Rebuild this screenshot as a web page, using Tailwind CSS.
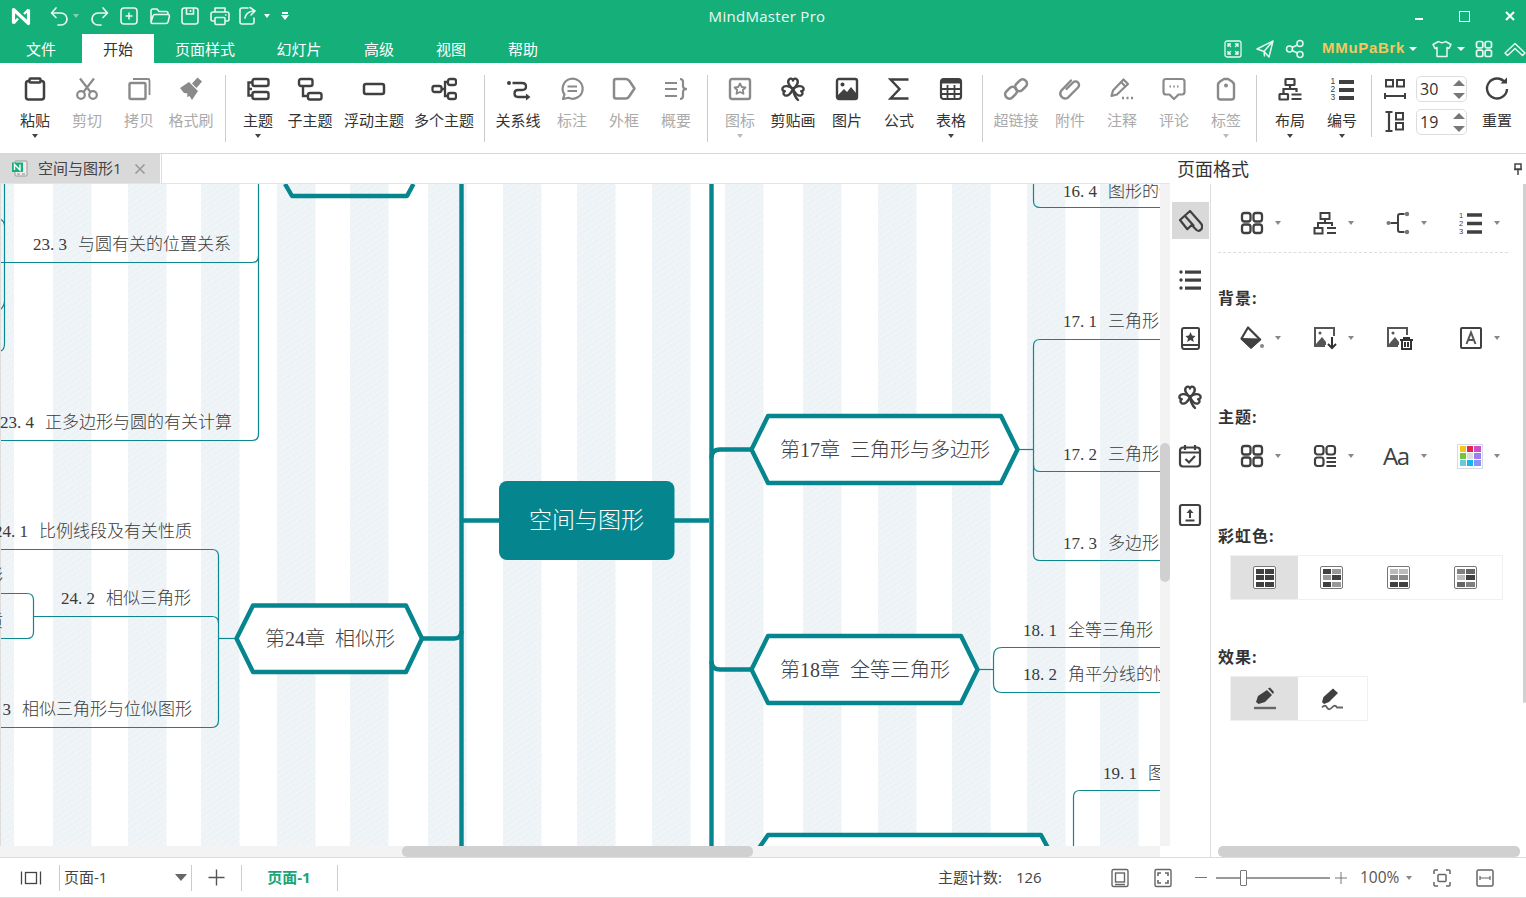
<!DOCTYPE html>
<html lang="zh">
<head>
<meta charset="utf-8">
<title>MindMaster Pro</title>
<script src="https://cdn.jsdelivr.net/npm/@tailwindcss/browser@4"></script>
</head>
<body class="m-0 bg-white">
<svg class="absolute w-0 h-0" aria-hidden="true">
  <defs>
    <symbol id="apps" viewBox="0 0 24 24"><g fill="none" stroke="currentColor" stroke-width="2.3"><rect x="2" y="2" width="8.5" height="8.5" rx="2.5"/><rect x="13.5" y="2" width="8.5" height="8.5" rx="2.5"/><rect x="2" y="13.5" width="8.5" height="8.5" rx="2.5"/><rect x="13.5" y="13.5" width="8.5" height="8.5" rx="2.5"/></g></symbol>
    <symbol id="clover" viewBox="0 0 26 26"><g fill="none" stroke="currentColor" stroke-width="2.4" stroke-linejoin="round" stroke-linecap="round"><path d="M13 13C9 10 7 6 9 3.500C10.500 2 12.500 2.500 13 4.500C13.500 2.500 15.500 2 17 3.500C19 6 17 10 13 13Z"/><path d="M13 13C9 10 7 6 9 3.500C10.500 2 12.500 2.500 13 4.500C13.500 2.500 15.500 2 17 3.500C19 6 17 10 13 13Z" transform="rotate(-105 13 13)"/><path d="M13 13C9 10 7 6 9 3.500C10.500 2 12.500 2.500 13 4.500C13.500 2.500 15.500 2 17 3.500C19 6 17 10 13 13Z" transform="rotate(105 13 13)"/><path d="M13 13Q14 20 18 24"/></g></symbol>
    <pattern id="hatch" width="7" height="7" patternUnits="userSpaceOnUse" patternTransform="rotate(12)">
      <rect width="7" height="7" fill="#ecf2f5"/>
      <path d="M0 7L7 0M-1 1L1 -1M6 8L8 6" stroke="#f7fafb" stroke-width="0.800"/>
      <path d="M0 0L7 7M6 -1L8 1M-1 6L1 8" stroke="#f3f7f9" stroke-width="0.800"/>
    </pattern>
  </defs>
</svg>

<div class="w-[1526px] h-[898px] overflow-hidden flex flex-col font-['Open_Sans','Noto_Sans_CJK_SC',sans-serif] text-[#333]">

  <!-- title bar -->
  <div class="h-[34px] pb-[2px] bg-[#15af79] grid grid-cols-[1fr_auto_1fr] items-center text-white shrink-0">
    <div class="flex items-center pl-[10px]">
      <svg class="w-[22px] h-[22px]" viewBox="0 0 22 22" fill="none" stroke="#fff" stroke-width="3.200" stroke-linejoin="round"><path d="M3.500 18.500V4.500L18.500 18.500V4.500"/><path d="M3.500 18.500L8 13.500M18.500 4.500L14 9" stroke-width="2.400"/></svg>
      <svg class="ml-[16px] w-[22px] h-[22px]" viewBox="0 0 22 22" fill="none" stroke="#e6f7f0" stroke-width="1.700" stroke-linecap="round" stroke-linejoin="round"><path d="M8 3L3.500 8L8 12.500M4 8H13A6 6 0 0 1 13 20H10"/></svg>
      <i class="ml-[3px] w-0 h-0 border-x-[3.500px] border-x-transparent border-t-[4px] border-t-[#7fd2b4]"></i>
      <svg class="ml-[10px] w-[22px] h-[22px]" viewBox="0 0 22 22" fill="none" stroke="#e6f7f0" stroke-width="1.700" stroke-linecap="round" stroke-linejoin="round"><path d="M14 3L18.500 8L14 12.500M18 8H9A6 6 0 0 0 9 20H12"/></svg>
      <svg class="ml-[7px] w-[22px] h-[22px]" viewBox="0 0 22 22" fill="none" stroke="#e6f7f0" stroke-width="1.600"><rect x="3" y="3" width="16" height="16" rx="3"/><path d="M11 7.500V14.500M7.500 11H14.500"/></svg>
      <svg class="ml-[9px] w-[22px] h-[22px]" viewBox="0 0 22 22" fill="none" stroke="#e6f7f0" stroke-width="1.600" stroke-linejoin="round"><path d="M2 17V6Q2 4 4 4H8L10 6.500H17Q19 6.500 19 8.500V9M2 17Q2 18.500 4 18.500H17Q18.500 18.500 19 17L20.500 11Q20.500 9.500 19 9.500H6Q4.500 9.500 4 11L2 17Z"/></svg>
      <svg class="ml-[8px] w-[22px] h-[22px]" viewBox="0 0 22 22" fill="none" stroke="#e6f7f0" stroke-width="1.600"><rect x="3" y="3" width="16" height="16" rx="2.500"/><path d="M7.500 3V9H14.500V3M11.500 5V7"/></svg>
      <svg class="ml-[8px] w-[22px] h-[22px]" viewBox="0 0 22 22" fill="none" stroke="#e6f7f0" stroke-width="1.600" stroke-linejoin="round"><path d="M6 7V3H16V7M6 16H3.500Q2 16 2 14V9Q2 7 4 7H18Q20 7 20 9V14Q20 16 18.500 16H16"/><rect x="6" y="12.500" width="10" height="7" rx="1"/><path d="M16 10H17.500"/></svg>
      <svg class="ml-[6px] w-[22px] h-[22px]" viewBox="0 0 22 22" fill="none" stroke="#e6f7f0" stroke-width="1.600" stroke-linecap="round" stroke-linejoin="round"><path d="M11 3H5Q3 3 3 5V17Q3 19 5 19H15Q17 19 17 17V13M8 13Q9 7 16 6M13 2.500L18 6L14 10"/></svg>
      <i class="ml-[5px] w-0 h-0 border-x-[3.500px] border-x-transparent border-t-[4px] border-t-white"></i>
      <div class="ml-[11px] w-[8px] flex flex-col items-center gap-[1px]"><i class="w-[6px] h-[2px] bg-white"></i><i class="w-0 h-0 border-x-[4px] border-x-transparent border-t-[5px] border-t-white"></i></div>
    </div>
    <div class="pl-[8px] text-[15px] tracking-[0.3px] text-[#eefaf5] leading-[20px]">MindMaster Pro</div>
    <div class="flex items-center justify-end gap-[34px] pr-[10px]">
      <i class="block w-[8px] h-[2px] bg-white mt-[6px] ml-[2px] mr-[2px]"></i>
      <i class="block w-[11px] h-[11px] border-[1.500px] border-white"></i>
      <svg class="w-[12px] h-[12px]" viewBox="0 0 12 12" stroke="#fff" stroke-width="2"><path d="M2 2L10 10M10 2L2 10"/></svg>
    </div>
  </div>

  <!-- menu tabs -->
  <div class="h-[29px] bg-[#15af79] flex items-stretch justify-between shrink-0 text-[15px] text-white">
    <div class="flex items-stretch">
      <div class="w-[82px] pt-[1px] flex items-center justify-center">文件</div>
      <div class="w-[72px] pt-[1px] flex items-center justify-center bg-white text-[#333]">开始</div>
      <div class="w-[102px] pt-[1px] flex items-center justify-center">页面样式</div>
      <div class="w-[86px] pt-[1px] flex items-center justify-center">幻灯片</div>
      <div class="w-[74px] pt-[1px] flex items-center justify-center">高级</div>
      <div class="w-[70px] pt-[1px] flex items-center justify-center">视图</div>
      <div class="w-[74px] pt-[1px] flex items-center justify-center">帮助</div>
    </div>
    <div class="flex items-center w-[303px]">
      <svg class="w-[20px] h-[20px]" viewBox="0 0 20 20" fill="none" stroke="#e6f7f0" stroke-width="1.300"><rect x="2" y="2" width="16" height="16" rx="2"/><path d="M5 8V5H8M12 5H15V8M5 12V15H8M15 12V15H12M5 5L8 8M15 5L12 8M5 15L8 12M15 15L12 12"/></svg>
      <svg class="ml-[12px] w-[20px] h-[20px]" viewBox="0 0 20 20" fill="none" stroke="#e6f7f0" stroke-width="1.500" stroke-linejoin="round"><path d="M18 2L2 10L9 12.500L14 18L18 2ZM18 2L9 12.500L9.500 17.500"/></svg>
      <svg class="ml-[10px] w-[20px] h-[20px]" viewBox="0 0 20 20" fill="none" stroke="#e6f7f0" stroke-width="1.500"><circle cx="4.500" cy="10" r="3"/><circle cx="15" cy="4.500" r="3"/><circle cx="15" cy="15.500" r="3"/><path d="M7 8.500L12.500 6M7 11.500L12.500 14"/></svg>
      <span class="ml-[17px] w-[83px] font-bold text-[15px] text-[#f6c660] font-['Liberation_Sans',sans-serif] tracking-[0.7px] whitespace-nowrap">MMuPaBrk</span>
      <i class="ml-[4px] w-0 h-0 border-x-[4px] border-x-transparent border-t-[4px] border-t-white"></i>
      <svg class="ml-[15px] w-[20px] h-[20px]" viewBox="0 0 20 20" fill="none" stroke="#e6f7f0" stroke-width="1.500" stroke-linejoin="round"><path d="M6.500 2.500Q10 5 13.500 2.500L19 5.500L17 9.500L15 8.500V17.500H5V8.500L3 9.500L1 5.500Z"/></svg>
      <i class="ml-[5px] w-0 h-0 border-x-[4px] border-x-transparent border-t-[4px] border-t-white"></i>
      <svg class="ml-[10px] w-[18px] h-[18px] text-[#e6f7f0]"><use href="#apps"/></svg>
      <svg class="ml-[11px] w-[22px] h-[20px]" viewBox="0 0 22 20" fill="none" stroke="#e6f7f0" stroke-width="1.500" stroke-linejoin="round"><path d="M1 14L11 4.500L21 14L18.500 16.500L11 9.500L3.500 16.500Z"/></svg>
    </div>
  </div>

  <!-- ribbon -->
  <div class="h-[91px] bg-white border-b border-[#d8d8d8] flex items-start pl-[9px] shrink-0 text-[15px]">
    <!-- G1 -->
    <div class="w-[52px] flex flex-col items-center pt-[13px]">
      <svg class="w-[26px] h-[26px] text-[#404040]" viewBox="0 0 26 26" fill="none" stroke="currentColor" stroke-width="2.500"><rect x="4" y="5" width="18" height="18.500" rx="2.500"/><rect x="7.500" y="2.500" width="11" height="4" rx="1" fill="#fff"/></svg>
      <span class="mt-[9px] leading-[18px] whitespace-nowrap">粘贴</span>
      <i class="mt-[5px] w-0 h-0 border-x-[3.500px] border-x-transparent border-t-[4px] border-t-[#444]"></i>
    </div>
    <div class="w-[52px] flex flex-col items-center pt-[13px]">
      <svg class="w-[26px] h-[26px] text-[#8a8a8a]" viewBox="0 0 26 26" fill="none" stroke="currentColor" stroke-width="2.200"><circle cx="7" cy="19" r="3.800"/><circle cx="19" cy="19" r="3.800"/><path d="M9.500 16L20 2.500M16.500 16L6 2.500"/></svg>
      <span class="mt-[9px] leading-[18px] whitespace-nowrap text-[#aaa]">剪切</span>
    </div>
    <div class="w-[52px] flex flex-col items-center pt-[13px]">
      <svg class="w-[26px] h-[26px] text-[#8a8a8a]" viewBox="0 0 26 26" fill="none" stroke="currentColor" stroke-width="2.400"><rect x="3.500" y="7" width="16" height="16" rx="1.500"/><path d="M7 3H22Q23.500 3 23.500 4.500V19" stroke-width="1.800"/></svg>
      <span class="mt-[9px] leading-[18px] whitespace-nowrap text-[#aaa]">拷贝</span>
    </div>
    <div class="w-[52px] flex flex-col items-center pt-[13px]">
      <svg class="w-[26px] h-[26px] text-[#8a8a8a]" viewBox="0 0 26 26" fill="currentColor"><path d="M2 12L11 6L20 15L14 24L11.500 20L9 21L9.500 17.500L6 17Z"/><path d="M14 7.500L19.500 1.500L24 5.500L18.500 12Z"/></svg>
      <span class="mt-[9px] leading-[18px] whitespace-nowrap text-[#aaa]">格式刷</span>
    </div>
    <i class="ml-[8px] mt-[12px] w-px h-[67px] bg-[#ccc]"></i>
    <!-- G2 -->
    <div class="ml-[6px] w-[52px] flex flex-col items-center pt-[13px]">
      <svg class="w-[26px] h-[26px] text-[#404040]" viewBox="0 0 26 26" fill="none" stroke="currentColor" stroke-width="2.400"><rect x="7.500" y="3" width="16" height="7" rx="2"/><rect x="7.500" y="16" width="16" height="7" rx="2"/><path d="M7.500 6.500H3.500V19.500H7.500M3.500 13H7"/></svg>
      <span class="mt-[9px] leading-[18px] whitespace-nowrap">主题</span>
      <i class="mt-[5px] w-0 h-0 border-x-[3.500px] border-x-transparent border-t-[4px] border-t-[#444]"></i>
    </div>
    <div class="w-[52px] flex flex-col items-center pt-[13px]">
      <svg class="w-[26px] h-[26px] text-[#404040]" viewBox="0 0 26 26" fill="none" stroke="currentColor" stroke-width="2.400"><rect x="2" y="3" width="13.500" height="7" rx="2"/><rect x="11" y="17" width="13.500" height="6.500" rx="2"/><path d="M6 10V20H11"/></svg>
      <span class="mt-[9px] leading-[18px] whitespace-nowrap">子主题</span>
    </div>
    <div class="w-[76px] flex flex-col items-center pt-[13px]">
      <svg class="w-[26px] h-[26px] text-[#404040]" viewBox="0 0 26 26" fill="none" stroke="currentColor" stroke-width="2.500"><rect x="3" y="8" width="20" height="10" rx="2"/></svg>
      <span class="mt-[9px] leading-[18px] whitespace-nowrap">浮动主题</span>
    </div>
    <div class="w-[64px] flex flex-col items-center pt-[13px]">
      <svg class="w-[26px] h-[26px] text-[#404040]" viewBox="0 0 26 26" fill="none" stroke="currentColor" stroke-width="2.300"><rect x="1.500" y="10" width="9" height="6" rx="2"/><rect x="17" y="3" width="8" height="6" rx="2"/><rect x="17" y="17" width="8" height="6" rx="2"/><path d="M10.500 13H14M17 6H14V20H17"/></svg>
      <span class="mt-[9px] leading-[18px] whitespace-nowrap">多个主题</span>
    </div>
    <i class="ml-[8px] mt-[12px] w-px h-[67px] bg-[#ccc]"></i>
    <!-- G3 -->
    <div class="ml-[7px] w-[52px] flex flex-col items-center pt-[13px]">
      <svg class="w-[26px] h-[26px] text-[#404040]" viewBox="0 0 26 26" fill="none" stroke="currentColor" stroke-width="2.300"><circle cx="4" cy="7" r="2" fill="currentColor" stroke="none"/><path d="M7.500 7H17Q21 7 21 10.500Q21 14 17 14H13Q9.500 14 9.500 17.500Q9.500 21 13 21H21"/><path d="M21 17.500L25.500 21L21 24.500Z" fill="currentColor" stroke="none"/></svg>
      <span class="mt-[9px] leading-[18px] whitespace-nowrap">关系线</span>
    </div>
    <div class="w-[56px] flex flex-col items-center pt-[13px]">
      <svg class="w-[26px] h-[26px] text-[#8a8a8a]" viewBox="0 0 26 26" fill="none" stroke="currentColor" stroke-width="2.200" stroke-linejoin="round"><path d="M4 23L5.500 18.500A10 10 0 1 1 9.500 21.800Z"/><path d="M8.500 10.500H18M8.500 15H18"/></svg>
      <span class="mt-[9px] leading-[18px] whitespace-nowrap text-[#aaa]">标注</span>
    </div>
    <div class="w-[48px] flex flex-col items-center pt-[13px]">
      <svg class="w-[26px] h-[26px] text-[#8a8a8a]" viewBox="0 0 26 26" fill="none" stroke="currentColor" stroke-width="2.500" stroke-linejoin="round"><path d="M3 5Q3 3 5 3H15Q17 3 18.500 5L23.500 12.500L18.500 20Q17 22.500 15 22.500H5Q3 22.500 3 20.500Z"/></svg>
      <span class="mt-[9px] leading-[18px] whitespace-nowrap text-[#aaa]">外框</span>
    </div>
    <div class="w-[56px] flex flex-col items-center pt-[13px]">
      <svg class="w-[26px] h-[26px] text-[#8a8a8a]" viewBox="0 0 26 26" fill="none" stroke="currentColor" stroke-width="2.200"><path d="M2 7H14M2 13H14M2 20H14"/><path d="M17 3Q20 3 20 6V10Q20 13 24 13Q20 13 20 16V20Q20 23 17 23"/></svg>
      <span class="mt-[9px] leading-[18px] whitespace-nowrap text-[#aaa]">概要</span>
    </div>
    <i class="ml-[3px] mt-[12px] w-px h-[67px] bg-[#ccc]"></i>
    <!-- G4 -->
    <div class="ml-[6px] w-[52px] flex flex-col items-center pt-[13px]">
      <svg class="w-[26px] h-[26px] text-[#8a8a8a]" viewBox="0 0 26 26" fill="none" stroke="currentColor" stroke-width="2.400" stroke-linejoin="round"><rect x="3" y="3" width="20" height="20" rx="2"/><path d="M13 7.500L14.800 11L18.500 11.500L15.800 14L16.500 17.800L13 16L9.500 17.800L10.200 14L7.500 11.500L11.200 11Z" stroke-width="1.800"/></svg>
      <span class="mt-[9px] leading-[18px] whitespace-nowrap text-[#aaa]">图标</span>
      <i class="mt-[5px] w-0 h-0 border-x-[3.500px] border-x-transparent border-t-[4px] border-t-[#bbb]"></i>
    </div>
    <div class="w-[54px] flex flex-col items-center pt-[13px]">
      <svg class="w-[26px] h-[26px] text-[#404040]"><use href="#clover"/></svg>
      <span class="mt-[9px] leading-[18px] whitespace-nowrap">剪贴画</span>
    </div>
    <div class="w-[54px] flex flex-col items-center pt-[13px]">
      <svg class="w-[26px] h-[26px] text-[#404040]" viewBox="0 0 26 26" fill="none" stroke="currentColor" stroke-width="2.400"><rect x="3" y="3" width="20" height="20" rx="2"/><circle cx="8.500" cy="8.500" r="2" fill="currentColor" stroke="none"/><path d="M4 22V19L10 13L13 16L17 11L22 17V22Z" fill="currentColor" stroke="none"/></svg>
      <span class="mt-[9px] leading-[18px] whitespace-nowrap">图片</span>
    </div>
    <div class="w-[50px] flex flex-col items-center pt-[13px]">
      <svg class="w-[26px] h-[26px] text-[#404040]" viewBox="0 0 26 26" fill="none" stroke="currentColor" stroke-width="2.400"><path d="M22.500 3.500H4.500L13.500 13L4.500 22.500H22.500"/></svg>
      <span class="mt-[9px] leading-[18px] whitespace-nowrap">公式</span>
    </div>
    <div class="w-[54px] flex flex-col items-center pt-[13px]">
      <svg class="w-[26px] h-[26px] text-[#404040]" viewBox="0 0 26 26" fill="none" stroke="currentColor" stroke-width="2.200"><rect x="3" y="3" width="20" height="20" rx="2.500"/><path d="M3 5.500H23" stroke-width="4"/><path d="M3 13H23M3 18H23M9.500 9V23M16.500 9V23" stroke-width="1.800"/></svg>
      <span class="mt-[9px] leading-[18px] whitespace-nowrap">表格</span>
      <i class="mt-[5px] w-0 h-0 border-x-[3.500px] border-x-transparent border-t-[4px] border-t-[#444]"></i>
    </div>
    <i class="ml-[4px] mt-[12px] w-px h-[67px] bg-[#ccc]"></i>
    <!-- G5 -->
    <div class="ml-[7px] w-[52px] flex flex-col items-center pt-[13px]">
      <svg class="w-[26px] h-[26px] text-[#8a8a8a]" viewBox="0 0 26 26" fill="none" stroke="currentColor" stroke-width="2.600"><rect x="1.500" y="12.500" width="13" height="8.500" rx="4.200" transform="rotate(-45 8 16.700)"/><rect x="11.500" y="5" width="13" height="8.500" rx="4.200" transform="rotate(-45 18 9.200)"/></svg>
      <span class="mt-[9px] leading-[18px] whitespace-nowrap text-[#aaa]">超链接</span>
    </div>
    <div class="w-[56px] flex flex-col items-center pt-[13px]">
      <svg class="w-[26px] h-[26px] text-[#8a8a8a]" viewBox="0 0 26 26" fill="none" stroke="currentColor" stroke-width="2.400" stroke-linecap="round"><path d="M9.500 13L16 6.500A3.500 3.500 0 0 1 21 11.500L10.500 22A5 5 0 0 1 4 15L14 4.500"/></svg>
      <span class="mt-[9px] leading-[18px] whitespace-nowrap text-[#aaa]">附件</span>
    </div>
    <div class="w-[48px] flex flex-col items-center pt-[13px]">
      <svg class="w-[26px] h-[26px] text-[#8a8a8a]" viewBox="0 0 26 26" fill="none" stroke="currentColor" stroke-width="2.200" stroke-linejoin="round"><path d="M2.500 20L4 14.500L14.500 3.500L19 8L8 18.500Z"/><path d="M12 6L16.500 10.500"/><path d="M13 22H15M17.500 22H19.500M22 22H24" stroke-width="2.400"/></svg>
      <span class="mt-[9px] leading-[18px] whitespace-nowrap text-[#aaa]">注释</span>
    </div>
    <div class="w-[56px] flex flex-col items-center pt-[13px]">
      <svg class="w-[26px] h-[26px] text-[#8a8a8a]" viewBox="0 0 26 26" fill="none" stroke="currentColor" stroke-width="2.200" stroke-linejoin="round"><path d="M5 3H21Q23.500 3 23.500 5.500V16Q23.500 18.500 21 18.500H17.500L13 23L8.500 18.500H5Q2.500 18.500 2.500 16V5.500Q2.500 3 5 3Z"/><path d="M8.500 10.500H10M12.300 10.500H13.800M16 10.500H17.500" stroke-width="2.200"/></svg>
      <span class="mt-[9px] leading-[18px] whitespace-nowrap text-[#aaa]">评论</span>
    </div>
    <div class="w-[48px] flex flex-col items-center pt-[13px]">
      <svg class="w-[26px] h-[26px] text-[#8a8a8a]" viewBox="0 0 26 26" fill="none" stroke="currentColor" stroke-width="2.400" stroke-linejoin="round"><path d="M5 9Q5 7 7 5.500L11 3H15L19 5.500Q21 7 21 9V21Q21 23.500 18.500 23.500H7.500Q5 23.500 5 21Z"/><circle cx="13" cy="9.500" r="2" fill="currentColor" stroke="none"/></svg>
      <span class="mt-[9px] leading-[18px] whitespace-nowrap text-[#aaa]">标签</span>
      <i class="mt-[5px] w-0 h-0 border-x-[3.500px] border-x-transparent border-t-[4px] border-t-[#bbb]"></i>
    </div>
    <i class="ml-[6px] mt-[12px] w-px h-[67px] bg-[#ccc]"></i>
    <!-- G6 -->
    <div class="ml-[7px] w-[52px] flex flex-col items-center pt-[13px]">
      <svg class="w-[26px] h-[26px] text-[#404040]" viewBox="0 0 26 26" fill="none" stroke="currentColor" stroke-width="2.200"><rect x="8.500" y="3" width="9" height="6" rx="0.500"/><path d="M13 9V13M6.500 17.500V13H19.500V16"/><rect x="2.500" y="18" width="8.500" height="5.500" rx="0.500"/><path d="M14.500 18.500H24.500M14.500 23H24.500"/></svg>
      <span class="mt-[9px] leading-[18px] whitespace-nowrap">布局</span>
      <i class="mt-[5px] w-0 h-0 border-x-[3.500px] border-x-transparent border-t-[4px] border-t-[#444]"></i>
    </div>
    <div class="w-[52px] flex flex-col items-center pt-[13px]">
      <svg class="w-[26px] h-[26px] text-[#404040]" viewBox="0 0 26 26"><g fill="currentColor" font-family="Liberation Sans" font-size="8.500"><text x="1.500" y="8">1</text><text x="1.500" y="16">2</text><text x="1.500" y="24">3</text></g><path d="M10 6H25M10 14H25M10 22H25" stroke="currentColor" stroke-width="4"/></svg>
      <span class="mt-[9px] leading-[18px] whitespace-nowrap">编号</span>
      <i class="mt-[5px] w-0 h-0 border-x-[3.500px] border-x-transparent border-t-[4px] border-t-[#444]"></i>
    </div>
    <i class="ml-[3px] mt-[12px] w-px h-[62px] bg-[#ccc]"></i>
    <!-- G7 spacing -->
    <div class="ml-[11px] mt-[13px] flex flex-col gap-[7px]">
      <div class="flex items-center gap-[9px] h-[26px]">
        <svg class="w-[24px] h-[24px] text-[#404040]" viewBox="0 0 24 24" fill="none" stroke="currentColor" stroke-width="2"><rect x="3" y="3" width="7" height="6.500"/><rect x="14" y="3" width="7" height="6.500"/><path d="M2 19H22M2 16V22M22 16V22"/></svg>
        <div class="w-[51px] h-[26px] border border-[#ddd] rounded-[5px] flex items-center justify-between pl-[3px] pr-[1px] text-[16px] leading-none"><span>30</span><div class="flex flex-col gap-[7px]"><i class="block w-0 h-0 border-x-[6px] border-x-transparent border-b-[6px] border-b-[#777]"></i><i class="block w-0 h-0 border-x-[6px] border-x-transparent border-t-[6px] border-t-[#777]"></i></div></div>
      </div>
      <div class="flex items-center gap-[9px] h-[26px]">
        <svg class="w-[24px] h-[24px] text-[#404040]" viewBox="0 0 24 24" fill="none" stroke="currentColor" stroke-width="2"><rect x="13" y="3" width="7" height="6.500"/><rect x="13" y="13" width="7" height="6.500"/><path d="M6 2V21M2.500 2H9.500M2.500 21H9.500" stroke-width="2.200"/></svg>
        <div class="w-[51px] h-[26px] border border-[#ddd] rounded-[5px] flex items-center justify-between pl-[3px] pr-[1px] text-[16px] leading-none"><span>19</span><div class="flex flex-col gap-[7px]"><i class="block w-0 h-0 border-x-[6px] border-x-transparent border-b-[6px] border-b-[#777]"></i><i class="block w-0 h-0 border-x-[6px] border-x-transparent border-t-[6px] border-t-[#777]"></i></div></div>
      </div>
    </div>
    <div class="ml-[5px] w-[50px] flex flex-col items-center pt-[13px]">
      <svg class="w-[26px] h-[26px] text-[#404040]" viewBox="0 0 26 26" fill="none" stroke="currentColor" stroke-width="2.400"><path d="M21 6.500A10 10 0 1 0 23 13"/><path d="M16.500 7.500H23V1.500Z" fill="currentColor" stroke="none"/></svg>
      <span class="mt-[9px] leading-[18px] whitespace-nowrap">重置</span>
    </div>
  </div>

  <!-- main -->
  <div class="flex-1 min-h-0 flex">
    <div class="w-[1170px] flex flex-col">
      <div class="h-[30px] shrink-0 border-b border-[#e4e4e4] flex">
        <div class="w-[160px] h-[29px] bg-[#d9d9d9] flex items-center pl-[11px] text-[15px] text-[#444]">
          <svg class="w-[17px] h-[17px] shrink-0" viewBox="0 0 17 17"><rect x="4" y="1" width="12" height="15" rx="1" fill="#eee" stroke="#999"/><rect x="1" y="2.500" width="11" height="9.500" fill="#17b07c"/><path d="M3.500 10V4.500L9 10V4.500" fill="none" stroke="#fff" stroke-width="1.400"/><path d="M6 14H9M11 14H14" stroke="#888"/></svg>
          <span class="ml-[10px] whitespace-nowrap">空间与图形1</span>
          <svg class="ml-[12px] w-[12px] h-[12px]" viewBox="0 0 12 12" stroke="#999" stroke-width="1.600"><path d="M1.500 1.500L10.500 10.500M10.500 1.500L1.500 10.500"/></svg>
        </div>
        <i class="ml-px w-px h-[29px] bg-[#ddd]"></i>
      </div>

      <div class="h-[662px] flex shrink-0">
        <!-- canvas -->
        <div class="relative w-[1160px] h-[662px] overflow-hidden bg-white font-['Noto_Sans_CJK_SC',sans-serif] font-light text-[17px] leading-[20px] text-[#3a3a3a]">
          <svg class="absolute left-0 top-0 w-[1160px] h-[662px]" viewBox="0 184 1160 662">
            <g fill="url(#hatch)">
              <rect x="-24" y="184" width="38" height="662"/><rect x="53" y="184" width="38.500" height="662"/><rect x="128" y="184" width="38.500" height="662"/><rect x="201" y="184" width="38.500" height="662"/><rect x="277" y="184" width="38.500" height="662"/><rect x="350" y="184" width="38.500" height="662"/><rect x="428" y="184" width="38.500" height="662"/><rect x="503" y="184" width="38.500" height="662"/><rect x="577" y="184" width="38.500" height="662"/><rect x="652" y="184" width="38.500" height="662"/><rect x="725" y="184" width="38.500" height="662"/><rect x="803" y="184" width="38.500" height="662"/><rect x="878" y="184" width="38.500" height="662"/><rect x="952" y="184" width="38.500" height="662"/><rect x="1027" y="184" width="38.500" height="662"/><rect x="1100" y="184" width="38.500" height="662"/>
            </g>
            <g fill="none" stroke="#0b878f" stroke-width="1.200">
              <path d="M0 262.500H252Q258.500 262.500 258.500 256V184"/>
              <path d="M0 440.500H252Q258.500 440.500 258.500 434V256"/>
              <path d="M4.500 184V344Q4.500 349 1 351M0 219Q4.500 221 4.500 226M0 310Q4.500 306 4.500 301"/>
              <path d="M0 549.500H212Q218.500 549.500 218.500 556V720Q218.500 727.500 212 727.500H0"/>
              <path d="M33 616.500H212Q218.500 616.500 218.500 623"/>
              <path d="M218.500 638.500H236"/>
              <path d="M0 593.500H27Q33.500 593.500 33.500 600V632Q33.500 638.500 27 638.500H0"/>
              <path d="M1018 449.500H1033.500"/>
              <path d="M1160 339.500H1040Q1033.500 339.500 1033.500 346V554Q1033.500 560.500 1040 560.500H1160"/>
              <path d="M1033.500 465Q1033.500 471.500 1040 471.500H1160"/>
              <path d="M1033.500 184V201Q1033.500 207.500 1040 207.500H1160"/>
              <path d="M978 669.500H993.500"/>
              <path d="M1160 647.500H1002Q993.500 647.500 993.500 656V684Q993.500 692.500 1002 692.500H1160"/>
              <path d="M1160 790.500H1080Q1073.500 790.500 1073.500 797V846"/>
            </g>
            <g fill="none" stroke="#05858d" stroke-width="4.400" stroke-linejoin="round">
              <path d="M461.500 184V846M711.500 184V846"/>
              <path d="M463 520.500H499M674 520.500H709"/>
              <path d="M422 638.500H454Q461.500 638.500 461.500 631"/>
              <path d="M751 449.500H720Q711.500 449.500 711.500 458"/>
              <path d="M751 669.500H720Q711.500 669.500 711.500 661"/>
              <path d="M285 184L292 196H407L413.500 184"/>
              <path d="M236.500 638.500L253 605.500H406L422 638.500L406 672H253Z" fill="#fff"/>
              <path d="M751.500 449.500L768 416H1001L1017.500 449.500L1001 483H768Z" fill="#fff"/>
              <path d="M751.500 669.500L768 636H961L977.500 669.500L961 703H768Z" fill="#fff"/>
              <path d="M759 848L768 835H1041L1048 848" fill="#fff"/>
            </g>
            <rect x="499" y="481" width="175.500" height="79" rx="8" fill="#05858d"/>
          </svg>
          <i class="absolute left-0 top-0 w-px h-full bg-[#ddd]"></i>

          <div class="absolute left-[499px] top-[297px] w-[175px] h-[79px] pb-[5px] flex items-center justify-center text-white text-[23px]">空间与图形</div>

          <div class="absolute left-[265px] top-[444px] flex items-baseline whitespace-nowrap text-[20px] leading-[20px] text-[#444]"><span>第</span><span class="font-['Liberation_Serif',serif]">24</span><span>章</span><span class="ml-[10px]">相似形</span></div>
          <div class="absolute left-[780px] top-[255px] flex items-baseline whitespace-nowrap text-[20px] leading-[20px] text-[#444]"><span>第</span><span class="font-['Liberation_Serif',serif]">17</span><span>章</span><span class="ml-[10px]">三角形与多边形</span></div>
          <div class="absolute left-[780px] top-[475px] flex items-baseline whitespace-nowrap text-[20px] leading-[20px] text-[#444]"><span>第</span><span class="font-['Liberation_Serif',serif]">18</span><span>章</span><span class="ml-[10px]">全等三角形</span></div>

          <div class="absolute left-[33px] top-[49px] flex items-baseline whitespace-nowrap"><span class="w-[34px] font-['Liberation_Serif',serif]">23. 3</span><span class="ml-[11px]">与圆有关的位置关系</span></div>
          <div class="absolute left-[0px] top-[227px] flex items-baseline whitespace-nowrap"><span class="w-[34px] font-['Liberation_Serif',serif]">23. 4</span><span class="ml-[11px]">正多边形与圆的有关计算</span></div>
          <div class="absolute left-[-6px] top-[336px] flex items-baseline whitespace-nowrap"><span class="w-[34px] font-['Liberation_Serif',serif]">24. 1</span><span class="ml-[11px]">比例线段及有关性质</span></div>
          <div class="absolute left-[61px] top-[403px] flex items-baseline whitespace-nowrap"><span class="w-[34px] font-['Liberation_Serif',serif]">24. 2</span><span class="ml-[11px]">相似三角形</span></div>
          <div class="absolute left-[-23px] top-[514px] flex items-baseline whitespace-nowrap"><span class="w-[34px] font-['Liberation_Serif',serif]">24. 3</span><span class="ml-[11px]">相似三角形与位似图形</span></div>
          <div class="absolute left-[-14px] top-[381px] whitespace-nowrap">形</div>
          <div class="absolute left-[-14px] top-[426px] whitespace-nowrap">质</div>
          <div class="absolute left-[1063px] top-[-4px] flex items-baseline whitespace-nowrap"><span class="w-[34px] font-['Liberation_Serif',serif]">16. 4</span><span class="ml-[11px]">图形的性质</span></div>
          <div class="absolute left-[1063px] top-[126px] flex items-baseline whitespace-nowrap"><span class="w-[34px] font-['Liberation_Serif',serif]">17. 1</span><span class="ml-[11px]">三角形</span></div>
          <div class="absolute left-[1063px] top-[259px] flex items-baseline whitespace-nowrap"><span class="w-[34px] font-['Liberation_Serif',serif]">17. 2</span><span class="ml-[11px]">三角形</span></div>
          <div class="absolute left-[1063px] top-[348px] flex items-baseline whitespace-nowrap"><span class="w-[34px] font-['Liberation_Serif',serif]">17. 3</span><span class="ml-[11px]">多边形</span></div>
          <div class="absolute left-[1023px] top-[435px] flex items-baseline whitespace-nowrap"><span class="w-[34px] font-['Liberation_Serif',serif]">18. 1</span><span class="ml-[11px]">全等三角形</span></div>
          <div class="absolute left-[1023px] top-[479px] flex items-baseline whitespace-nowrap"><span class="w-[34px] font-['Liberation_Serif',serif]">18. 2</span><span class="ml-[11px]">角平分线的性质</span></div>
          <div class="absolute left-[1103px] top-[578px] flex items-baseline whitespace-nowrap"><span class="w-[34px] font-['Liberation_Serif',serif]">19. 1</span><span class="ml-[11px]">图形的旋转</span></div>
        </div>
        <!-- vertical scrollbar -->
        <div class="w-[10px] h-full bg-[#f3f3f3] pt-[259px]"><div class="h-[139px] w-full bg-[#d0d0d0] rounded-b-[5px] rounded-t-[5px]"></div></div>
      </div>

      <!-- horizontal scrollbar -->
      <div class="h-[11px] w-[1160px] bg-[#f3f3f3] pl-[402px] shrink-0"><div class="h-full w-[351px] bg-[#d0d0d0] rounded-[5px]"></div></div>
    </div>

    <!-- right panel -->
    <div class="w-[356px] flex flex-col relative">
      <div class="h-[30px] shrink-0 flex items-center justify-between pl-[7px] pr-[3px] text-[18px]">
        <span>页面格式</span>
        <svg class="w-[10px] h-[12px]" viewBox="0 0 10 12" fill="none" stroke="#444" stroke-width="1.500"><path d="M2 1H8V6H2ZM1 6.500H9M5 7V12"/></svg>
      </div>
      <div class="flex-1 min-h-0 flex">
        <!-- side strip -->
        <div class="w-[41px] border-r border-[#ddd] pt-[7.500px] flex flex-col">
          <div class="h-[58.800px] flex items-center justify-center"><div class="w-[37px] h-[37px] bg-[#d9d9d9] flex items-center justify-center">
            <svg class="w-[26px] h-[26px] text-[#404040]" viewBox="0 0 26 26" fill="none" stroke="currentColor" stroke-width="2.200" stroke-linejoin="round"><path d="M3 12L13 3L24 15.500Q26 18 24.500 21Q22 24 19.500 22L14.700 17L10.300 21.300Z"/><path d="M8 8L17 18"/></svg>
          </div></div>
          <div class="h-[58.800px] flex items-center justify-center">
            <svg class="w-[26px] h-[26px] text-[#404040]" viewBox="0 0 26 26" fill="currentColor"><circle cx="4" cy="5" r="1.700"/><circle cx="4" cy="13" r="1.700"/><circle cx="4" cy="21" r="1.700"/><rect x="8" y="3.500" width="16" height="3.200"/><rect x="8" y="11.500" width="16" height="3.200"/><rect x="8" y="19.500" width="16" height="3.200"/></svg>
          </div>
          <div class="h-[58.800px] flex items-center justify-center">
            <svg class="w-[26px] h-[26px] text-[#404040]" viewBox="0 0 26 26" fill="none" stroke="currentColor" stroke-width="2"><path d="M5 21V5Q5 3 7 3H21Q22 3 22 4V22Q22 24 20 24H7Q5 24 5 21ZM5 20H22"/><path d="M13.500 7L15 10.500L18.500 11L16 13.500L16.800 17L13.500 15L10.200 17L11 13.500L8.500 11L12 10.500Z" fill="currentColor" stroke="none"/></svg>
          </div>
          <div class="h-[58.800px] flex items-center justify-center">
            <svg class="w-[26px] h-[26px] text-[#404040]"><use href="#clover"/></svg>
          </div>
          <div class="h-[58.800px] flex items-center justify-center">
            <svg class="w-[26px] h-[26px] text-[#404040]" viewBox="0 0 26 26" fill="none" stroke="currentColor" stroke-width="2.200"><rect x="3" y="4.500" width="20" height="19" rx="3"/><path d="M3 9.500H23" stroke-width="2"/><path d="M8 2V7M18 2V7"/><path d="M8.500 16L12 19.500L18 13"/></svg>
          </div>
          <div class="h-[58.800px] flex items-center justify-center">
            <svg class="w-[26px] h-[26px] text-[#404040]" viewBox="0 0 26 26" fill="none" stroke="currentColor" stroke-width="2.200"><rect x="3" y="3" width="20" height="20" rx="2"/><path d="M8.500 18.500H17.500" stroke-width="2"/><path d="M13 16V10" stroke-width="2"/><path d="M9.500 11L13 7L16.500 11Z" fill="currentColor" stroke="none"/></svg>
          </div>
        </div>
        <!-- content -->
        <div class="flex-1 min-w-0 pt-[27px] pl-[7px] relative text-[16px]">
          <i class="absolute right-0 top-0 w-[3px] h-[519px] bg-[#d0d0d0] rounded-b-[2px]"></i>
          <div class="flex -ml-[2px]">
            <div class="w-[73px] h-[24px] flex items-center pl-[24px]"><svg class="w-[24px] h-[24px] text-[#404040]"><use href="#apps"/></svg><i class="ml-[11px] w-0 h-0 border-x-[3.500px] border-x-transparent border-t-[4px] border-t-[#888]"></i></div>
            <div class="w-[73px] h-[24px] flex items-center pl-[24px]"><svg class="w-[24px] h-[24px] text-[#404040]" viewBox="0 0 24 24" fill="none" stroke="currentColor" stroke-width="2"><rect x="7.500" y="2" width="9" height="6"/><path d="M12 8V12M5 17V12H19V15"/><rect x="1.500" y="17" width="8" height="5.500"/><path d="M14 17H23M14 22H23"/></svg><i class="ml-[11px] w-0 h-0 border-x-[3.500px] border-x-transparent border-t-[4px] border-t-[#888]"></i></div>
            <div class="w-[73px] h-[24px] flex items-center pl-[24px]"><svg class="w-[24px] h-[24px] text-[#404040]" viewBox="0 0 24 24" fill="none" stroke="currentColor" stroke-width="2"><circle cx="2.500" cy="12" r="2" fill="#777" stroke="none"/><circle cx="21" cy="3" r="2.200" fill="#777" stroke="none"/><circle cx="21" cy="21" r="2.200" fill="#777" stroke="none"/><path d="M4.500 12H11M18.500 3H14Q12 3 12 5V19Q12 21 14 21H18.500"/></svg><i class="ml-[11px] w-0 h-0 border-x-[3.500px] border-x-transparent border-t-[4px] border-t-[#888]"></i></div>
            <div class="w-[73px] h-[24px] flex items-center pl-[24px]"><svg class="w-[24px] h-[24px] text-[#404040]" viewBox="0 0 24 24"><g fill="currentColor" font-family="Liberation Sans" font-size="7.500"><text x="0" y="7">1</text><text x="0" y="15">2</text><text x="0" y="23">3</text></g><path d="M8 4H23M8 12.500H23M8 21H23" stroke="currentColor" stroke-width="3.600"/></svg><i class="ml-[11px] w-0 h-0 border-x-[3.500px] border-x-transparent border-t-[4px] border-t-[#888]"></i></div>
          </div>
          <div class="mt-[17px] w-[290px] border-t border-dashed border-[#ddd]"></div>

          <div class="mt-[35px] h-[20px] leading-[20px] font-bold tracking-[1px]">背景:</div>
          <div class="flex -ml-[2px] mt-[18px]">
            <div class="w-[73px] h-[24px] flex items-center pl-[24px]"><svg class="w-[24px] h-[24px] text-[#404040]" viewBox="0 0 24 24" fill="none" stroke="currentColor" stroke-width="2.200" stroke-linejoin="round"><path d="M8 1.500L1.500 12.500L11 21.500L20 13.500Z"/><path d="M2 13L11 21.500L20 13.500Z" fill="currentColor"/><circle cx="22" cy="20" r="2" fill="#888" stroke="none"/></svg><i class="ml-[11px] w-0 h-0 border-x-[3.500px] border-x-transparent border-t-[4px] border-t-[#888]"></i></div>
            <div class="w-[73px] h-[24px] flex items-center pl-[24px]"><svg class="w-[24px] h-[24px] text-[#555]" viewBox="0 0 24 24" fill="none" stroke="currentColor" stroke-width="2"><path d="M12 20H2V2H21V10"/><path d="M3 18L9 11L13 16V19H3Z" fill="currentColor" stroke="none"/><circle cx="7" cy="7" r="1.500" fill="currentColor" stroke="none"/><path d="M19 11V22M15 18L19 22L23 18" stroke="#333"/></svg><i class="ml-[11px] w-0 h-0 border-x-[3.500px] border-x-transparent border-t-[4px] border-t-[#888]"></i></div>
            <div class="w-[73px] h-[24px] flex items-center pl-[24px]"><svg class="w-[28px] h-[24px] text-[#555]" viewBox="0 0 28 24" fill="none" stroke="currentColor" stroke-width="2"><path d="M12 20H2V2H21V9"/><path d="M3 18L9 11L13 16V19H3Z" fill="currentColor" stroke="none"/><circle cx="7" cy="7" r="1.500" fill="currentColor" stroke="none"/><path d="M14 14H27M17 12H24M16 14V23H25V14M19 16V21M22 16V21" stroke="#333"/></svg></div>
            <div class="w-[73px] h-[24px] flex items-center pl-[24px]"><svg class="w-[24px] h-[24px] text-[#404040]" viewBox="0 0 24 24" fill="none" stroke="currentColor" stroke-width="2"><rect x="2" y="2" width="20" height="20" rx="1"/><path d="M7.500 18L12 6.500L16.500 18M9 14H15" stroke="#555"/></svg><i class="ml-[11px] w-0 h-0 border-x-[3.500px] border-x-transparent border-t-[4px] border-t-[#888]"></i></div>
          </div>

          <div class="mt-[57px] h-[20px] leading-[20px] font-bold tracking-[1px]">主题:</div>
          <div class="flex -ml-[2px] mt-[17px]">
            <div class="w-[73px] h-[24px] flex items-center pl-[24px]"><svg class="w-[24px] h-[24px] text-[#404040]"><use href="#apps"/></svg><i class="ml-[11px] w-0 h-0 border-x-[3.500px] border-x-transparent border-t-[4px] border-t-[#888]"></i></div>
            <div class="w-[73px] h-[24px] flex items-center pl-[24px]"><svg class="w-[24px] h-[24px] text-[#404040]" viewBox="0 0 24 24" fill="none" stroke="currentColor" stroke-width="2.200"><rect x="2" y="2" width="8.500" height="8.500" rx="2.500"/><rect x="13.500" y="2" width="8.500" height="8.500" rx="2.500"/><rect x="2" y="13.500" width="8.500" height="8.500" rx="2.500"/><path d="M13.500 14H23M13.500 18H23M13.500 22H23" stroke-width="1.800"/></svg><i class="ml-[11px] w-0 h-0 border-x-[3.500px] border-x-transparent border-t-[4px] border-t-[#888]"></i></div>
            <div class="w-[73px] h-[24px] flex items-center pl-[21px]"><span class="w-[30px] font-['Open_Sans',sans-serif] text-[24px] leading-[24px] text-[#404040] tracking-[-1.500px] whitespace-nowrap">Aa</span><i class="ml-[8px] w-0 h-0 border-x-[3.500px] border-x-transparent border-t-[4px] border-t-[#888]"></i></div>
            <div class="w-[73px] h-[24px] flex items-center pl-[22px]">
              <div class="w-[26px] h-[25px] border border-[#d5dbe6] grid grid-cols-3 gap-[1px] p-[1.500px]">
                <i class="bg-[#f5c518]"></i><i class="bg-[#e0284f]"></i><i class="bg-[#c84fc8]"></i><i class="bg-[#6fc83c]"></i><i class="bg-[#dddddd]"></i><i class="bg-[#9a7ff0]"></i><i class="bg-[#6cc9dc]"></i><i class="bg-[#12b7f0]"></i><i class="bg-[#8a8ff5]"></i>
              </div>
              <i class="ml-[11px] w-0 h-0 border-x-[3.500px] border-x-transparent border-t-[4px] border-t-[#888]"></i>
            </div>
          </div>

          <div class="mt-[58px] h-[20px] leading-[20px] font-bold tracking-[1px]">彩虹色:</div>
          <div class="mt-[9px] ml-[12px] w-[273px] h-[45px] border border-[#f0f0f0] flex">
            <div class="w-[67px] bg-[#e0e0e0] flex items-center justify-center">
              <div class="w-[23px] h-[23px] border border-[#777] rounded-[2px] bg-white grid grid-cols-2 gap-[1.500px] p-[1.500px]"><i class="bg-[#404040]"></i><i class="bg-[#404040]"></i><i class="bg-[#404040]"></i><i class="bg-[#404040]"></i><i class="bg-[#404040]"></i><i class="bg-[#404040]"></i></div>
            </div>
            <div class="w-[67px] flex items-center justify-center">
              <div class="w-[23px] h-[23px] border border-[#777] rounded-[2px] bg-white grid grid-cols-2 gap-[1.500px] p-[1.500px]"><i class="bg-[#404040]"></i><i class="bg-[#999]"></i><i class="bg-[#999]"></i><i class="bg-[#404040]"></i><i class="bg-[#404040]"></i><i class="bg-[#999]"></i></div>
            </div>
            <div class="w-[67px] flex items-center justify-center">
              <div class="w-[23px] h-[23px] border border-[#777] rounded-[2px] bg-white grid grid-cols-2 gap-[1.500px] p-[1.500px]"><i class="bg-[#bbb]"></i><i class="bg-[#bbb]"></i><i class="bg-[#888]"></i><i class="bg-[#888]"></i><i class="bg-[#404040]"></i><i class="bg-[#404040]"></i></div>
            </div>
            <div class="w-[67px] flex items-center justify-center">
              <div class="w-[23px] h-[23px] border border-[#777] rounded-[2px] bg-white grid grid-cols-2 gap-[1.500px] p-[1.500px]"><i class="bg-[#808080]"></i><i class="bg-[#666]"></i><i class="bg-[#bbb]"></i><i class="bg-[#404040]"></i><i class="bg-[#666]"></i><i class="bg-[#808080]"></i></div>
            </div>
          </div>

          <div class="mt-[47px] h-[20px] leading-[20px] font-bold tracking-[1px]">效果:</div>
          <div class="mt-[9px] ml-[12px] w-[138px] h-[45px] border border-[#f0f0f0] flex">
            <div class="w-[67px] bg-[#e0e0e0] flex items-center justify-center">
              <svg class="w-[24px] h-[24px] text-[#404040]" viewBox="0 0 24 24" fill="currentColor"><path d="M3 15L5 9L14 3L19 8L12 15L5.500 17Z"/><path d="M15 1.500L17 0.500L21 5L20 7Z"/><path d="M1 21H23" stroke="#666" stroke-width="2.400"/></svg>
            </div>
            <div class="w-[67px] flex items-center justify-center">
              <svg class="w-[24px] h-[24px] text-[#404040]" viewBox="0 0 24 24" fill="none"><path d="M2 15L3.500 10L13 1.500L18 6L9 15L4 17Z" fill="currentColor"/><path d="M2 20.500Q5 17 7 20.500T12 20.500T17 20.500H23" stroke="#666" stroke-width="1.800"/></svg>
            </div>
          </div>

          <div class="absolute left-[7px] right-[6px] bottom-0 h-[11px] bg-[#d0d0d0] rounded-[5px]"></div>
        </div>
      </div>
    </div>
  </div>

  <!-- status bar -->
  <div class="h-[41px] shrink-0 border-t border-b border-[#dcdcdc] bg-white flex items-center text-[15px] text-[#444]">
    <div class="w-[59px] flex justify-center pl-[3px]"><svg class="w-[22px] h-[16px]" viewBox="0 0 22 16" fill="none" stroke="#444" stroke-width="1.300"><rect x="5.500" y="2.500" width="11" height="11"/><path d="M1.500 1.500V14.500M20.500 1.500V14.500"/></svg></div>
    <i class="w-px h-[26px] bg-[#ccc]"></i>
    <div class="w-[131px] flex items-center justify-between pl-[4px] pr-[4px]"><span>页面-1</span><i class="w-0 h-0 border-x-[6px] border-x-transparent border-t-[7px] border-t-[#666]"></i></div>
    <i class="w-px h-[26px] bg-[#ccc]"></i>
    <div class="w-[49px] flex justify-center"><svg class="w-[17px] h-[17px]" viewBox="0 0 17 17" stroke="#555" stroke-width="1.400"><path d="M8.500 0.500V16.500M0.500 8.500H16.500"/></svg></div>
    <i class="w-px h-[26px] bg-[#ccc]"></i>
    <div class="w-[95px] flex justify-center font-bold text-[#18a577] pr-[1px]">页面-1</div>
    <i class="w-px h-[26px] bg-[#ccc]"></i>
    <div class="ml-[600px] w-[170px] whitespace-nowrap"><span>主题计数:</span><span class="ml-[14px]">126</span></div>
    <svg class="w-[24px] h-[24px]" viewBox="0 0 24 24" fill="none" stroke="#666" stroke-width="1.400"><rect x="4" y="3.500" width="16" height="17" rx="1.500"/><rect x="7.500" y="7" width="9" height="9"/><path d="M7 18.500H17"/></svg>
    <svg class="ml-[19px] w-[24px] h-[24px]" viewBox="0 0 24 24" fill="none" stroke="#666" stroke-width="1.400"><rect x="4" y="3.500" width="16" height="17" rx="1.500"/><path d="M7 10V7H10M14 7H17V10M7 14V17H10M17 14V17H14" stroke-width="1.600"/></svg>
    <i class="ml-[20px] w-[12px] h-px bg-[#777]"></i>
    <div class="ml-[9px] w-[114px] h-[2px] bg-[#999] relative"><i class="absolute left-[24px] top-[-7px] w-[7px] h-[16px] bg-white border border-[#777] rounded-[1px]"></i></div>
    <svg class="ml-[5px] w-[12px] h-[12px]" viewBox="0 0 12 12" stroke="#777"><path d="M6 0V12M0 6H12"/></svg>
    <span class="ml-[13px] w-[40px] text-[15.500px] text-[#555] whitespace-nowrap">100%</span>
    <i class="ml-[6px] w-0 h-0 border-x-[3px] border-x-transparent border-t-[4px] border-t-[#888]"></i>
    <svg class="ml-[18px] w-[24px] h-[24px]" viewBox="0 0 24 24" fill="none" stroke="#666" stroke-width="1.500"><path d="M4 8V5Q4 4 5 4H8M16 4H19Q20 4 20 5V8M4 16V19Q4 20 5 20H8M16 20H19Q20 20 20 19V16"/><rect x="8" y="8.500" width="8" height="7" rx="1"/></svg>
    <svg class="ml-[19px] w-[24px] h-[24px]" viewBox="0 0 24 24" fill="none" stroke="#666" stroke-width="1.500"><rect x="4" y="4" width="16" height="16" rx="1.500"/><path d="M7 12H17M7 10V14M17 10V14" stroke-width="1.200"/></svg>
  </div>
</div>
</body>
</html>
